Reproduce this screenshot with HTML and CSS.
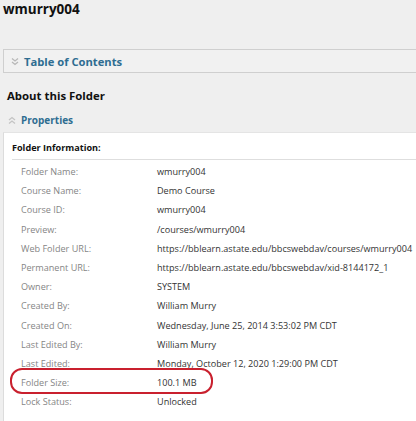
FILE: index.html
```html
<!DOCTYPE html>
<html>
<head>
<meta charset="utf-8">
<link rel="stylesheet" href="styles.css">
</head>
<body>
<h1 class="title">wmurry004</h1>
<div class="toc-bar">
  <svg class="chev" width="8" height="9" viewBox="0 0 8 9"><path d="M1 1.5 L4 4 L7 1.5 M1 5 L4 7.5 L7 5" fill="none" stroke="#b8b8b8" stroke-width="1.3"/></svg>
  <span class="toc-text">Table of Contents</span>
</div>
<h2 class="section">About this Folder</h2>
<div class="props-head">
  <svg class="chev" width="8" height="9" viewBox="0 0 8 9"><path d="M1 4 L4 1.5 L7 4 M1 7.5 L4 5 L7 7.5" fill="none" stroke="#c4c4c4" stroke-width="1.3"/></svg>
  <span class="props-text">Properties</span>
</div>
<div class="panel">
  <div class="panel-title">Folder Information:</div>
  <div class="rows">
    <div class="row"><span class="label">Folder Name:</span><span class="value">wmurry004</span></div>
    <div class="row"><span class="label">Course Name:</span><span class="value">Demo Course</span></div>
    <div class="row"><span class="label">Course ID:</span><span class="value">wmurry004</span></div>
    <div class="row"><span class="label">Preview:</span><span class="value">/courses/wmurry004</span></div>
    <div class="row"><span class="label">Web Folder URL:</span><span class="value">https://bblearn.astate.edu/bbcswebdav/courses/wmurry004</span></div>
    <div class="row"><span class="label">Permanent URL:</span><span class="value">https://bblearn.astate.edu/bbcswebdav/xid-8144172_1</span></div>
    <div class="row"><span class="label">Owner:</span><span class="value">SYSTEM</span></div>
    <div class="row"><span class="label">Created By:</span><span class="value">William Murry</span></div>
    <div class="row"><span class="label">Created On:</span><span class="value">Wednesday, June 25, 2014 3:53:02 PM CDT</span></div>
    <div class="row"><span class="label">Last Edited By:</span><span class="value">William Murry</span></div>
    <div class="row"><span class="label">Last Edited:</span><span class="value">Monday, October 12, 2020 1:29:00 PM CDT</span></div>
    <div class="row highlight"><span class="label">Folder Size:</span><span class="value">100.1 MB</span><span class="oval"></span></div>
    <div class="row"><span class="label">Lock Status:</span><span class="value">Unlocked</span></div>
  </div>
</div>
</body>
</html>
```
FILE: styles.css
```css
html, body {
  margin: 0;
  padding: 0;
  background: #efefef;
  font-family: "Open Sans", "Noto Sans", sans-serif;
  overflow: hidden;
  width: 416px;
  height: 421px;
}
.title {
  margin: 0;
  padding: 0 0 0 3px;
  font-size: 13.5px;
  font-weight: 700;
  line-height: 19px;
  color: #111;
}
.toc-bar {
  margin: 30px 0 0 3px;
  height: 22px;
  border: 1px solid #cfcfcf;
  border-right: none;
  background: #f1f1f1;
  display: flex;
  align-items: center;
  padding-left: 7px;
  gap: 5px;
}
.toc-text {
  font-size: 11.2px;
  font-weight: 700;
  color: #2e6d91;
}
.section {
  margin: 14px 0 0 7px;
  font-size: 11.4px;
  font-weight: 700;
  line-height: 18px;
  color: #111;
}
.props-head {
  margin: 6px 0 0 8px;
  display: flex;
  align-items: center;
  gap: 5px;
  height: 18px;
}
.props-text {
  font-size: 10px;
  font-weight: 700;
  color: #2e6d91;
}
.panel {
  margin: 3px 0 0 3px;
  background: #fff;
  border-left: 1px solid #dcdcdc;
  border-top: 1px solid #e4e4e4;
  padding: 7px 0 0 8px;
  height: 300px;
}
.panel-title {
  font-size: 9.1px;
  font-weight: 700;
  color: #111;
  line-height: 16px;
  padding-bottom: 3px;
  border-bottom: 1px solid #dedede;
}
.rows {
  padding-top: 2px;
}
.row {
  position: relative;
  display: flex;
  height: 19.2px;
  align-items: center;
  font-size: 9.1px;
}
.label {
  flex: 0 0 auto;
  width: 136px;
  padding-left: 9px;
  box-sizing: content-box;
  color: #858585;
}
.value {
  color: #333;
  white-space: nowrap;
}
.oval {
  position: absolute;
  left: -2px;
  top: -5px;
  width: 199px;
  height: 22px;
  border: 2.5px solid #c9202e;
  border-radius: 12px;
}
```
